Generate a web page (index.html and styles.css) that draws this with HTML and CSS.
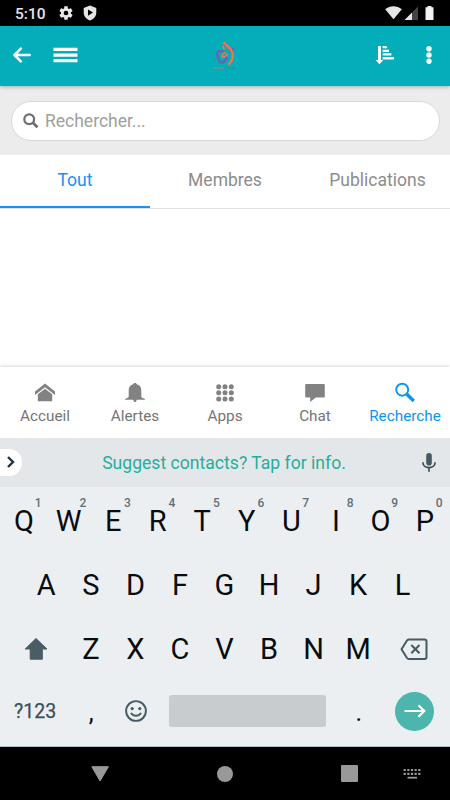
FILE: index.html
```html
<!DOCTYPE html>
<html lang="fr">
<head>
<meta charset="utf-8">
<title>Recherche</title>
<link rel="stylesheet" href="styles.css">
</head>
<body>
<div class="status">
  <span class="clock">5:10</span>
  <svg class="gear" width="16" height="16" viewBox="0 0 24 24"><path fill="#e6e6e6" d="M19.43 12.98c.04-.32.07-.64.07-.98s-.03-.66-.07-.98l2.11-1.65c.19-.15.24-.42.12-.64l-2-3.46c-.12-.22-.39-.3-.61-.22l-2.49 1c-.52-.4-1.08-.73-1.69-.98l-.38-2.65C14.46 2.18 14.25 2 14 2h-4c-.25 0-.46.18-.49.42l-.38 2.65c-.61.25-1.17.59-1.69.98l-2.49-1c-.23-.09-.49 0-.61.22l-2 3.46c-.13.22-.07.49.12.64l2.11 1.65c-.04.32-.07.65-.07.98s.03.66.07.98l-2.11 1.65c-.19.15-.24.42-.12.64l2 3.46c.12.22.39.3.61.22l2.49-1c.52.4 1.08.73 1.69.98l.38 2.65c.03.24.24.42.49.42h4c.25 0 .46-.18.49-.42l.38-2.65c.61-.25 1.17-.59 1.69-.98l2.49 1c.23.09.49 0 .61-.22l2-3.46c.12-.22.07-.49-.12-.64l-2.11-1.65zM12 15.5a3.5 3.5 0 1 1 0-7 3.500 3.500 0 0 1 0 7z"/></svg>
  <svg class="shield" width="14" height="16" viewBox="0 0 14 16"><path fill="#e6e6e6" fill-rule="evenodd" d="M7 .5 13.300 3v4.500c0 4-2.800 6.600-6.300 8-3.500-1.400-6.300-4-6.300-8V3zM5 4.500v6.200l5-3.100z"/></svg>
  <svg class="signals" width="50" height="16" viewBox="0 0 50 16"><path fill="#e6e6e6" d="M.2 4.200C5 .3 12 .3 16.800 4.200L8.500 14.300z"/><path fill="#e6e6e6" d="M19.500 15 27 7.500V15z"/><path fill="#444" d="M27 7.500 33 1.500V15h-6z"/><path fill="#f2f2f2" d="M42.500 1h4v1.300h2V15h-8V2.300h2z"/></svg>
</div>
<header class="bar">
  <svg class="back" width="18" height="16" viewBox="0 0 18 16"><path d="M16.700 8H2M7.800 1.700 1.500 8l6.300 6.300" fill="none" stroke="#fff" stroke-width="2.500" stroke-linecap="round" stroke-linejoin="round"/></svg>
  <svg class="burger" width="25" height="16" viewBox="0 0 25 16"><path d="M.5 2.400h24M.5 8.100h24M.5 13.600h24" stroke="#fff" stroke-width="3.200"/></svg>
  <svg class="logo" width="24" height="32" viewBox="0 0 24 32"><path d="M10.500 11.500c-4-.8-6.200-.6-6.200 1.700 0 4 1.500 8.800 4.300 9.500 2.400.2 4-3 5.700-5.700" fill="none" stroke="#6b63b0" stroke-width="2.400"/><path d="m16 12.500 5-4.500" stroke="#6b63b0" stroke-width="2"/><path d="M10.500 2.500c5.500 4.500 9.300 8 9.300 13.300 0 3.500-1.800 6.500-4.600 9" fill="none" stroke="#f1744f" stroke-width="2.500"/><path d="m9.500 5.500 2 4M13 12.500c-3 .8-4.200 2.500-3.500 4.500 1.400.8 3.500-1.500 5.500-3" fill="none" stroke="#f1744f" stroke-width="1.800"/><path d="M1 28h10" stroke="#b78862" stroke-width=".9"/><path d="M11 28h12" stroke="#38899e" stroke-width=".8"/></svg>
  <svg class="sort" width="20" height="20" viewBox="0 0 20 20"><g fill="#fff"><path d="M3 1h3v14h2.300l-3.800 4.300L.5 15H3z"/><path d="M7.600 1h3.800l1 2.200H7.600zM7.600 4.800H14V7H7.600zM7.600 8.300h8.800v2.200H7.600zM7.600 12h11.500v2.400H7.600z"/></g></svg>
  <svg class="dots" width="6" height="20" viewBox="0 0 6 20"><g fill="#fff"><circle cx="3" cy="3.800" r="2.700"/><circle cx="3" cy="10" r="2.700"/><circle cx="3" cy="16.200" r="2.700"/></g></svg>
</header>
<main class="page">
  <div class="search">
    <label class="field">
      <svg width="16" height="16" viewBox="0 0 16 16"><circle cx="6.200" cy="6.200" r="4.900" fill="none" stroke="#6e6e6e" stroke-width="2.200"/><path d="m9.800 9.800 4.700 4.500" stroke="#6e6e6e" stroke-width="2.700"/></svg>
      <span>Rechercher...</span>
    </label>
  </div>
  <nav class="tabs"><span class="tab on">Tout</span><span class="tab">Membres</span><span class="tab">Publications</span></nav>
</main>
<nav class="dock">
  <div class="item"><svg width="24" height="24" viewBox="0 0 24 24"><g fill="#828282"><path d="m12 2.500 10 7.900v3.500L12 6.300 2 13.900v-3.500z"/><path d="m12 7.700 7.200 5.600v7H4.800v-7z"/></g></svg><span>Accueil</span></div>
  <div class="item"><svg width="24" height="24" viewBox="0 0 24 24"><path fill="#828282" d="M12 2c1 0 1.500.5 1.700 1.300C17 4 18.300 6.500 18.300 9.500v6c0 1 1.300 1.700 3.700 2.400v.8h-8.300c-.2 1.700-.8 2.300-1.700 2.300s-1.500-.6-1.700-2.300H2v-.8c2.400-.7 3.700-1.400 3.700-2.400v-6c0-3 1.300-5.500 4.600-6.200C10.500 2.500 11 2 12 2z"/></svg><span>Alertes</span></div>
  <div class="item"><svg width="24" height="24" viewBox="0 0 24 24"><path d="M5.700 5.700h.01M12 5.700h.01M18.300 5.700h.01M5.700 11.800h.01M12 11.800h.01M18.300 11.800h.01M5.700 17.900h.01M12 17.900h.01M18.300 17.900h.01" stroke="#828282" stroke-width="5" stroke-linecap="round"/></svg><span>Apps</span></div>
  <div class="item"><svg width="24" height="24" viewBox="0 0 24 24"><path fill="#828282" d="M3.500 3h17c.8 0 1.300.5 1.300 1.300v11c0 .8-.5 1.300-1.300 1.300h-7.700L7.200 21v-4.400H3.500c-.8 0-1.300-.5-1.300-1.300v-11C2.200 3.500 2.700 3 3.500 3z"/></svg><span>Chat</span></div>
  <div class="item on"><svg width="24" height="24" viewBox="0 0 24 24"><circle cx="9.200" cy="8.700" r="6" fill="none" stroke="#0a95f5" stroke-width="1.900"/><path d="m13.600 13 7.200 7" stroke="#0a95f5" stroke-width="3.400"/></svg><span>Recherche</span></div>
</nav>
<div class="hint">
  <span class="expand"><svg width="10" height="14" viewBox="0 0 10 14"><path d="m2 2 5 5-5 5" fill="none" stroke="#183642" stroke-width="2.400"/></svg></span>
  <span class="message">Suggest contacts? Tap for info.</span>
  <svg class="mic" width="16" height="20" viewBox="0 0 16 20"><rect x="5.200" y="0" width="5.600" height="12.500" rx="2.800" fill="#455a64"/><path d="M1.900 9.300c0 3.300 2.600 5.300 6.100 5.300s6.100-2 6.100-5.300M8 14.600v4.200" fill="none" stroke="#37474f" stroke-width="1.600"/></svg>
</div>
<section class="keys">
  <div class="row r1"><b>Q<i>1</i></b><b>W<i>2</i></b><b>E<i>3</i></b><b>R<i>4</i></b><b>T<i>5</i></b><b>Y<i>6</i></b><b>U<i>7</i></b><b>I<i>8</i></b><b>O<i>9</i></b><b>P<i>0</i></b></div>
  <div class="row r2"><b>A</b><b>S</b><b>D</b><b>F</b><b>G</b><b>H</b><b>J</b><b>K</b><b>L</b></div>
  <div class="row r3">
    <svg class="wide" viewBox="0 0 66 40"><path fill="#4a5c64" stroke="#4a5c64" stroke-linejoin="round" d="M33 9.500 44 20h-4.700v10.200H27.200V20H22.200z"/></svg>
    <b>Z</b><b>X</b><b>C</b><b>V</b><b>B</b><b>N</b><b>M</b>
    <svg class="wide" viewBox="0 0 66 40"><g fill="none" stroke="#455a64" stroke-width="2"><path stroke-linejoin="round" d="M29 10.500h15.500q2 0 2 2v15.500q0 2-2 2H29q-1.200 0-2-1l-5.500-8.700 5.500-8.800q.8-1 2-1z"/><path d="m31.300 16 8.200 8.300m0-8.300-8.200 8.300"/></g></svg>
  </div>
  <div class="row r4">
    <span class="mode">?123</span>
    <b class="comma">,</b>
    <svg class="smile" width="24" height="24" viewBox="0 0 24 24"><g fill="none" stroke="#455a64" stroke-width="1.900"><circle cx="12" cy="12" r="9.900"/><path d="M7 13.900c1.900 3.800 8.100 3.800 10 0"/></g><g fill="#455a64"><circle cx="8.200" cy="9.600" r="1.600"/><circle cx="15.800" cy="9.600" r="1.600"/></g></svg>
    <span class="space"></span>
    <b class="dot">.</b>
    <span class="go"><svg width="22" height="14" viewBox="0 0 22 14"><path d="M.5 7h19M14.500 1.300 20.300 7l-5.800 5.700" fill="none" stroke="#fff" stroke-width="2.200"/></svg></span>
  </div>
</section>
<footer class="system">
  <svg class="sysback" width="20" height="18" viewBox="0 0 20 18"><path fill="#999" stroke="#999" stroke-linejoin="round" d="M1.800 1.700h16.600L10.100 16z"/></svg>
  <span class="home"></span>
  <span class="recent"></span>
  <svg class="kbd" width="18" height="12" viewBox="0 0 18 12"><path d="M.6 2h17M.6 5.800h17" stroke="#999" stroke-width="2.200" stroke-dasharray="2.200 1.450"/><path d="M4.500 9.700h9.500" stroke="#999" stroke-width="1.800"/></svg>
</footer>
</body>
</html>
```
FILE: styles.css
```css
* { box-sizing: border-box; }
body { margin: 0; width: 450px; height: 800px; overflow: hidden; display: flex; flex-direction: column; background: #fff; font-family: Roboto, "Liberation Sans", sans-serif; }
svg { display: block; flex: none; }

.status { height: 26px; flex: none; background: #000; color: #e6e6e6; display: flex; align-items: center; padding-left: 15px; }
.clock { width: 43px; font-size: 15.500px; line-height: 26px; font-weight: 500; padding-top: 2px; }
.shield { margin-left: 9px; }
.signals { margin-left: 288px; }

.bar { height: 60px; flex: none; background: #03adba; display: flex; align-items: center; padding-left: 13px; position: relative; z-index: 1; box-shadow: 0 1px 4px rgba(0,0,0,.28); }
.back { margin-top: -3px; }
.burger { margin-left: 22px; margin-top: -2px; }
.logo { margin-left: 135px; }
.sort { margin-left: 138px; margin-top: -3px; }
.dots { margin-left: 31px; margin-top: -2px; }

.page { flex: 1; display: flex; flex-direction: column; }
.search { height: 69px; background: #ececec; padding: 15px 10px 14px 11px; }
.field { height: 40px; border: 1px solid #d9d9d9; border-radius: 20px; background: #fff; display: flex; align-items: center; gap: 6px; padding-left: 11px; }
.field span { color: #a0a0a0; font-size: 17.500px; line-height: 38px; }
.tabs { height: 54px; border-bottom: 1px solid #e2e2e2; display: flex; }
.tab { width: 150px; height: 53px; padding-bottom: 1px; font-size: 17.500px; line-height: 51px; text-align: center; color: #8c8c8c; }
.tab:last-child { padding-left: 5px; }
.tab.on { color: #1593f3; border-bottom: 2px solid #1593f3; }

.dock { height: 71px; flex: none; display: flex; background: #fff; box-shadow: 0 0 4px rgba(0,0,0,.25); }
.item { width: 90px; display: flex; flex-direction: column; align-items: center; padding-top: 14px; font-size: 15.300px; line-height: 22px; color: #757575; }
.item.on { color: #0a95f5; }

.hint { height: 49px; flex: none; background: #e4e7e9; display: flex; align-items: center; position: relative; }
.expand { width: 22px; height: 27px; background: #fff; border-radius: 0 13px 13px 0; padding: 6px 0 0 6px; }
.message { width: 404px; padding-top: 1px; text-align: center; color: #27ae9b; font-size: 17.600px; }
.mic { margin-left: -5px; }

.keys { height: 260px; flex: none; background: #eceff1; border-bottom: 1px solid #b0bec5; }
.row { display: flex; justify-content: center; align-items: center; padding-right: 1px; font-size: 29px; color: #080c10; }
.row b { position: relative; width: 44.550px; font-weight: 400; text-align: center; }
.row i { position: absolute; left: 31.500px; top: -8px; width: 10px; font-style: normal; font-weight: 500; font-size: 12px; line-height: 14px; color: #607078; }
.r1 { height: 67px; }
.r2 { height: 61px; }
.r3 { height: 68px; }
.wide { width: 66px; height: 40px; }
.r4 { height: 56px; justify-content: flex-start; }
.mode { width: 69px; padding-left: 14px; font-size: 19.500px; color: #37505c; -webkit-text-stroke: .25px #37505c; }
.row .comma, .row .dot { font-size: 25px; padding-top: 3px; }
.smile { margin-left: 10px; }
.space { width: 157px; height: 32px; margin-left: 21px; border-radius: 3px; background: #c8cccf; }
.row .dot { margin-left: 11px; }
.go { width: 39px; height: 39px; margin-left: 14px; border-radius: 50%; background: #4db6ac; display: flex; align-items: center; justify-content: center; }

.system { height: 53px; flex: none; background: #000; display: flex; align-items: center; }
.sysback { margin-left: 90px; }
.home { width: 16px; height: 16px; border-radius: 50%; background: #999; margin-left: 107px; }
.recent { width: 17px; height: 17px; border-radius: 1px; background: #999; margin-left: 108px; }
.kbd { margin-left: 45px; }
```
